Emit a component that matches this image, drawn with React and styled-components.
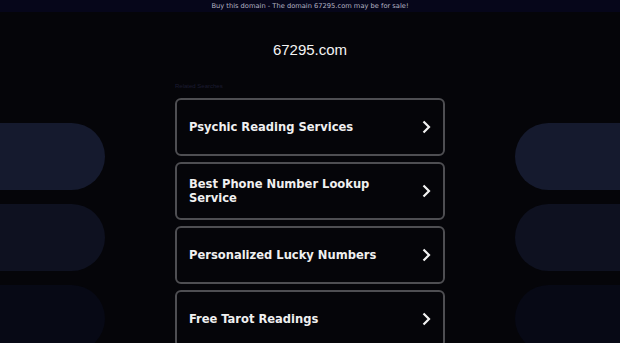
import styled, { createGlobalStyle } from "styled-components";

const GlobalStyle = createGlobalStyle`
  html, body {
    margin: 0;
    padding: 0;
    background: #050509;
    overflow: hidden;
  }
  body {
    font-family: "Liberation Sans", Arial, sans-serif;
  }
`;

const searches = [
  "Psychic Reading Services",
  "Best Phone Number Lookup Service",
  "Personalized Lucky Numbers",
  "Free Tarot Readings",
];

const pillColors = ["#151a2e", "#0e1120", "#070915"];

function Chevron() {
  return (
    <svg width="10" height="14" viewBox="0 0 10 14">
      <path
        d="M2.5 1.5 L8 7 L2.5 12.5"
        fill="none"
        stroke="#f2f2f2"
        strokeWidth="2.2"
      />
    </svg>
  );
}

export default function App() {
  return (
    <>
      <GlobalStyle />
      <TopBar>Buy this domain - The domain 67295.com may be for sale!</TopBar>
      <Page>
        <Side>
          {pillColors.map((c) => (
            <Pill key={c} color={c} side="left" />
          ))}
        </Side>
        <Main>
          <Title>67295.com</Title>
          <Related>Related Searches</Related>
          <List>
            {searches.map((s) => (
              <Card key={s}>
                <CardText>{s}</CardText>
                <Chevron />
              </Card>
            ))}
          </List>
        </Main>
        <Side>
          {pillColors.map((c) => (
            <Pill key={c} color={c} side="right" />
          ))}
        </Side>
      </Page>
    </>
  );
}

const TopBar = styled.div`
  height: 12px;
  background: #06061a;
  color: #b4b4c4;
  font-family: "DejaVu Sans", Verdana, sans-serif;
  font-size: 6.7px;
  line-height: 12px;
  text-align: center;
`;

const Page = styled.div`
  display: flex;
  width: 620px;
`;

const Side = styled.div`
  width: 105px;
  flex-shrink: 0;
  display: flex;
  flex-direction: column;
  gap: 14px;
  padding-top: 111px;
`;

const Pill = styled.div`
  height: 67px;
  background: ${({ color }) => color};
  border-radius: ${({ side }) =>
    side === "left" ? "0 34px 34px 0" : "34px 0 0 34px"};
`;

const Main = styled.div`
  flex: 1;
  display: flex;
  flex-direction: column;
  align-items: center;
`;

const Title = styled.h1`
  margin: 29px 0 0;
  font-size: 15px;
  line-height: 18px;
  font-weight: normal;
  color: #f4f4f4;
`;

const Related = styled.div`
  width: 270px;
  margin: 21px 0 6px;
  font-size: 6px;
  line-height: 12px;
  color: #1c1c32;
`;

const List = styled.div`
  display: flex;
  flex-direction: column;
  gap: 6px;
`;

const Card = styled.div`
  box-sizing: border-box;
  width: 270px;
  height: 58px;
  border: 2px solid #4e4e52;
  border-radius: 6px;
  padding: 0 12px;
  display: flex;
  align-items: center;
  justify-content: space-between;
`;

const CardText = styled.div`
  font-family: "DejaVu Sans Condensed", "DejaVu Sans", Verdana, sans-serif;
  font-weight: bold;
  font-size: 12.8px;
  line-height: 14px;
  color: #f0f0f0;
  max-width: 210px;
`;
